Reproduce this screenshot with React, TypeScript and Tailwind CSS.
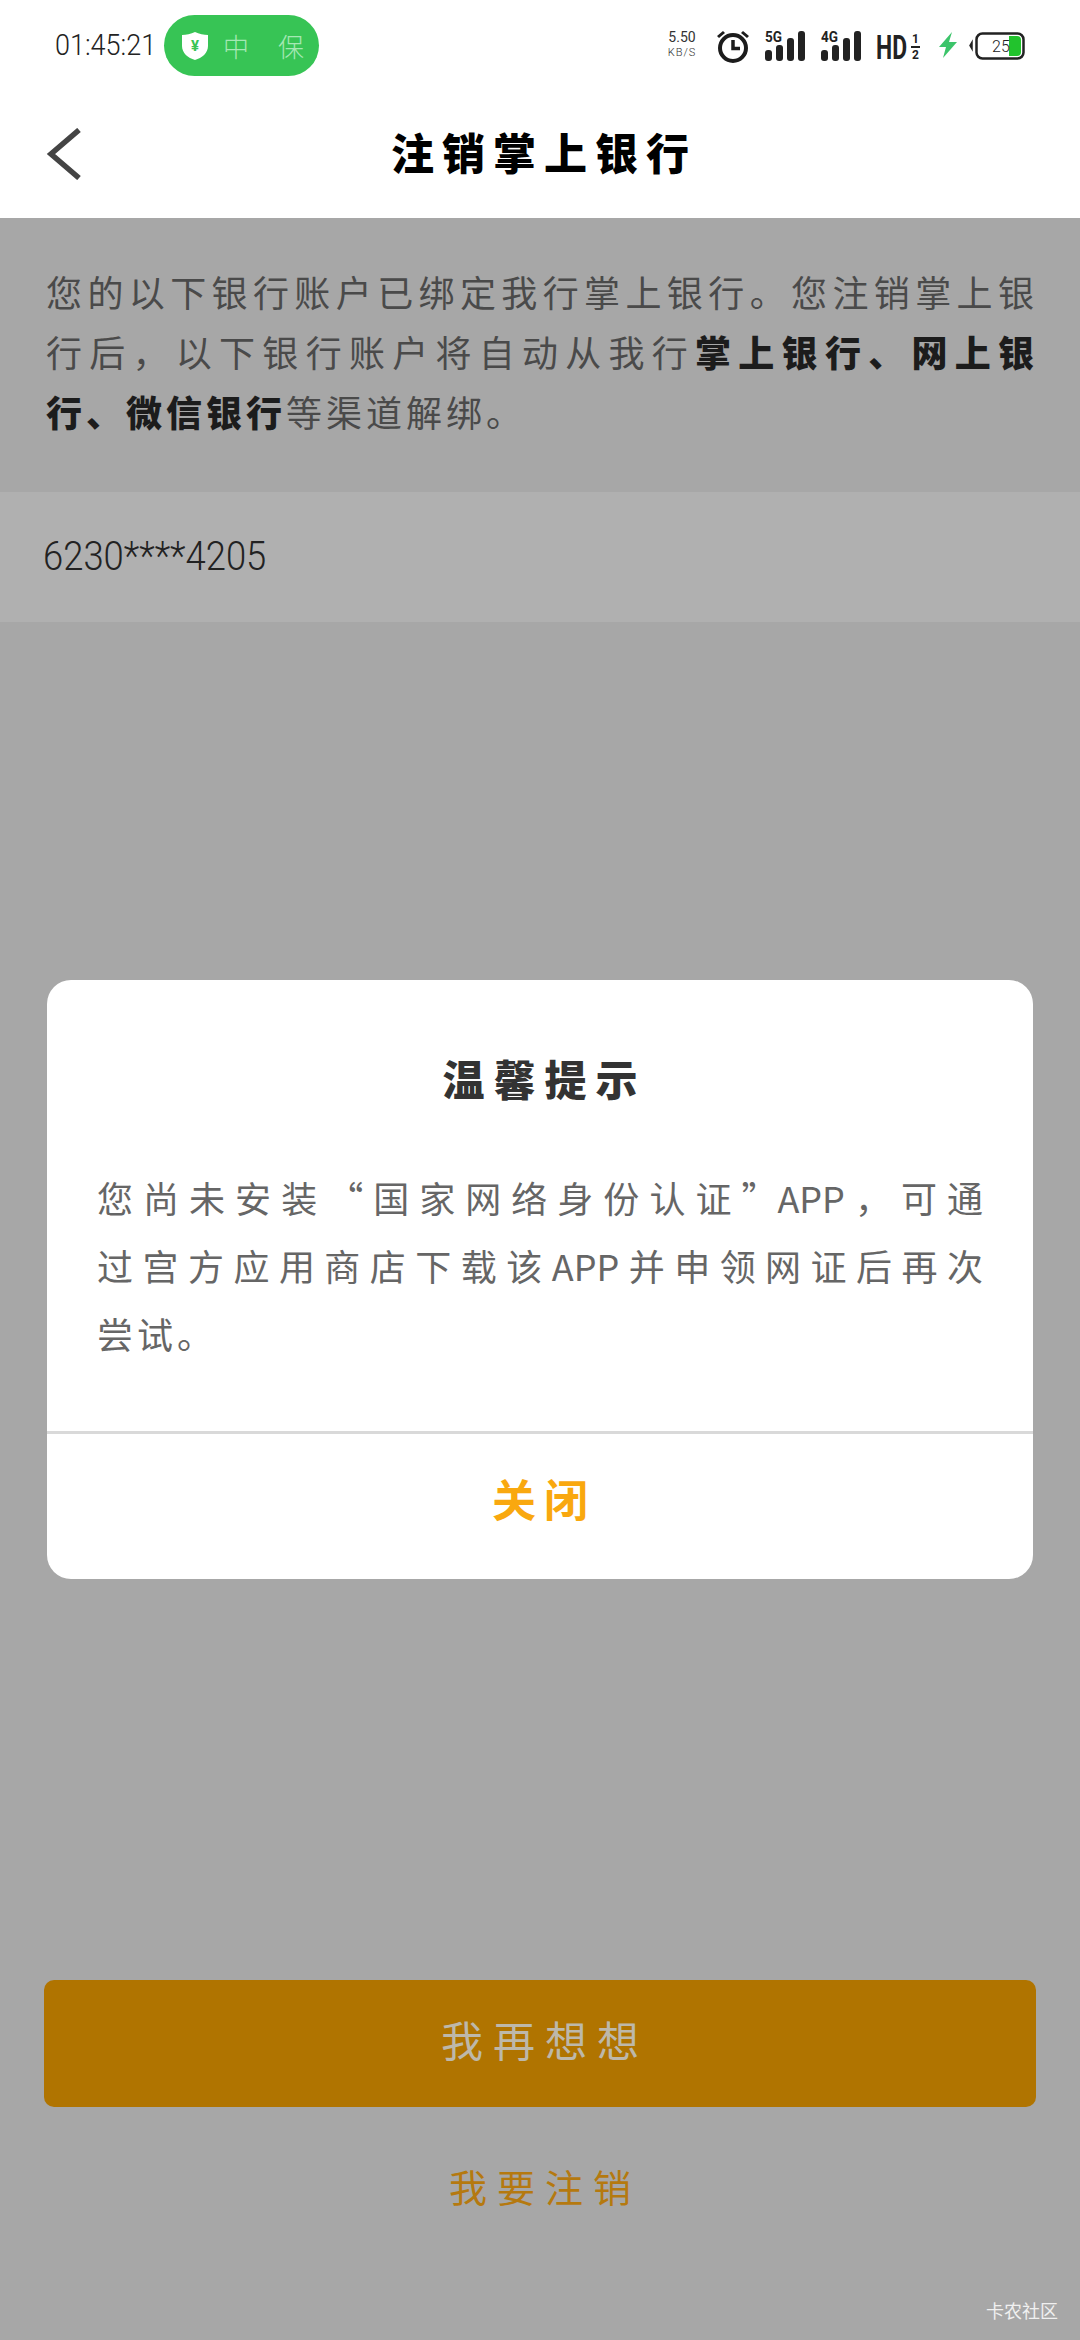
import React from 'react';

const cjk = "font-['Noto_Sans_CJK_SC','Noto_Sans',sans-serif]";

const Signal: React.FC<{ label: string }> = ({ label }) => (
  <svg width="40" height="32" viewBox="0 0 40 32" className="overflow-visible text-[#222]">
    <text x="0" y="12" fontSize="15" fontWeight="700" fontFamily="Roboto, sans-serif" fill="currentColor" textLength="17" lengthAdjust="spacingAndGlyphs">
      {label}
    </text>
    <rect x="0" y="20" width="7" height="11" rx="3" fill="currentColor" />
    <rect x="11" y="15" width="7" height="16" rx="3" fill="currentColor" />
    <rect x="22" y="8" width="7" height="23" rx="3" fill="currentColor" />
    <rect x="33" y="1" width="7" height="30" rx="3" fill="currentColor" />
  </svg>
);

const StatusBar: React.FC = () => (
  <div className="flex h-[90px] items-start bg-white pl-[55px] pr-[55px]">
    <div className="mt-[28px] w-[109px] origin-left scale-x-[0.9] whitespace-nowrap font-['Roboto',sans-serif] text-[30px] font-light leading-[34px] text-[#222]">
      01:45:21
    </div>
    <div className={`mt-[15px] flex h-[61px] w-[155px] items-center rounded-full bg-[#37c455] pl-[17px] text-[30px] leading-none text-[#a5e8b4] ${cjk}`}>
      <svg width="28" height="30" viewBox="0 0 28 30" className="overflow-visible">
        <path d="M14 1 C18 3 23 4 27 4 V15 C27 22 21 27 14 29 C7 27 1 22 1 15 V4 C5 4 10 3 14 1 Z" fill="#fff" />
        <text x="14" y="20" fontSize="15" fontWeight="700" textAnchor="middle" fill="#37c455" fontFamily="Roboto, sans-serif">
          ¥
        </text>
      </svg>
      <span className="ml-[14px] w-[55px] text-[26px] font-light">中</span>
      <span className="text-[26px] font-light">保</span>
    </div>
    <div className="ml-auto mt-[30px] flex items-start">
      <div className="flex w-[30px] flex-col items-center font-['Roboto',sans-serif] text-[#333]">
        <span className="text-[14px] leading-[15px]">5.50</span>
        <span className="text-[11px] font-light leading-[15px] tracking-[1px]">KB/S</span>
      </div>
      <svg width="34" height="33" viewBox="0 0 34 33" className="ml-[19px] text-[#1c1c1c]">
        <circle cx="17" cy="18" r="13" fill="none" stroke="currentColor" strokeWidth="4" />
        <path d="M17 10 V18.5 H24" fill="none" stroke="currentColor" strokeWidth="3.5" />
        <path d="M1 6 L7 1 L9 3 L3 8 Z M33 6 L27 1 L25 3 L31 8 Z" fill="currentColor" />
      </svg>
      <div className="ml-[15px]">
        <Signal label="5G" />
      </div>
      <div className="ml-[16px]">
        <Signal label="4G" />
      </div>
      <svg width="46" height="30" viewBox="0 0 46 30" className="ml-[15px] mt-[2px] overflow-visible text-[#222]">
        <text transform="translate(0 27) scale(0.88 1.3)" fontSize="26" fontWeight="700" fontFamily="Roboto, sans-serif" fill="currentColor">
          HD
        </text>
        <text x="36" y="11" fontSize="12" fontWeight="700" fontFamily="Roboto, sans-serif" fill="currentColor">
          1
        </text>
        <rect x="35" y="14" width="9" height="2" fill="currentColor" />
        <text x="36" y="27" fontSize="12" fontWeight="700" fontFamily="Roboto, sans-serif" fill="currentColor">
          2
        </text>
      </svg>
      <svg width="20" height="26" viewBox="0 0 20 26" className="ml-[16px] mt-[2px]">
        <path d="M14 0 L1 15 H8 L5 26 L19 10 H11 Z" fill="#3cc46a" />
      </svg>
      <svg width="56" height="28" viewBox="0 0 56 28" className="ml-[11px] mt-[2px] overflow-visible">
        <path d="M3 10 L1 13.5 L3 17 Z" fill="#222" stroke="#222" strokeWidth="1.5" />
        <rect x="7.5" y="1.5" width="47" height="25" rx="6" fill="none" stroke="#222" strokeWidth="2.5" />
        <path d="M40 4 H48 Q52 4 52 8 V20 Q52 24 48 24 H40 Z" fill="#22c32d" />
        <text x="23" y="20" fontSize="16" fontWeight="300" fontFamily="Roboto, sans-serif" fill="#222">
          25
        </text>
      </svg>
    </div>
  </div>
);

const App: React.FC = () => {
  return (
    <div className={`relative flex h-[2340px] w-[1080px] flex-col overflow-hidden bg-[#a7a7a7] ${cjk}`}>
      <StatusBar />

      {/* nav */}
      <div className="relative flex h-[128px] items-center justify-center bg-white">
        <svg width="36" height="52" viewBox="0 0 36 52" className="absolute left-[46px] top-[38px]">
          <path d="M33 2 L5 26 L33 50" fill="none" stroke="#444" strokeWidth="5.5" />
        </svg>
        <h1 className="-mt-[6px] pl-[8px] text-[43px] font-black leading-none tracking-[8px] text-black">注销掌上银行</h1>
      </div>

      {/* notice */}
      <div className="h-[274px] bg-[#a7a7a7] px-[46px] pt-[43px] text-[36px] leading-[60px] text-[#4a4a4a]">
        <div className="whitespace-nowrap text-justify [text-align-last:justify]">您的以下银行账户已绑定我行掌上银行。您注销掌上银</div>
        <div className="whitespace-nowrap text-justify [text-align-last:justify]">
          行后，以下银行账户将自动从我行<b className="font-black text-[#1c1c1c]">掌上银行、网上银</b>
        </div>
        <div className="whitespace-nowrap tracking-[4px]">
          <b className="font-black text-[#1c1c1c]">行、微信银行</b>等渠道解绑。
        </div>
      </div>

      {/* card row */}
      <div className="flex h-[130px] items-center bg-[#b0b0b0] pl-[43px]">
        <span className="origin-left scale-x-[0.91] whitespace-nowrap font-['Roboto',sans-serif] text-[40px] font-light leading-none text-[#222]">
          6230****4205
        </span>
      </div>

      {/* bottom actions */}
      <div className="mx-[44px] mt-[1358px] flex h-[127px] items-center justify-center rounded-[10px] bg-[#b07400] pb-[10px] pl-[10px] text-[42px] tracking-[10px] text-[#bdb8aa]">
        我再想想
      </div>
      <div className="mt-[50px] pl-[10px] text-center text-[38px] leading-[58px] tracking-[10px] text-[#b5790f]">我要注销</div>

      <span className="absolute bottom-[19px] right-[22px] text-[18px] leading-[22px] text-[#f0f0f0]">卡农社区</span>

      {/* dialog */}
      <div className="absolute left-[47px] top-[980px] flex h-[599px] w-[986px] flex-col rounded-[24px] bg-white">
        <div className="pl-[9px] pt-[69px] text-center text-[42px] font-black leading-[58px] tracking-[9px] text-[#333]">温馨提示</div>
        <div className="px-[50px] pt-[56px] text-[36px] leading-[68px] text-[#666]">
          <div className="whitespace-nowrap text-justify [text-align-last:justify]">您尚未安装“国家网络身份认证”APP，可通</div>
          <div className="whitespace-nowrap text-justify [text-align-last:justify]">过宫方应用商店下载该APP并申领网证后再次</div>
          <div className="whitespace-nowrap tracking-[4px]">尝试。</div>
        </div>
        <div className="mt-auto flex h-[148px] items-center justify-center border-t-[3px] border-[#d9d9d9] pb-[18px] pl-[8px] text-[44px] font-bold tracking-[8px] text-[#f9a80f]">
          关闭
        </div>
      </div>
    </div>
  );
};

export default App;
